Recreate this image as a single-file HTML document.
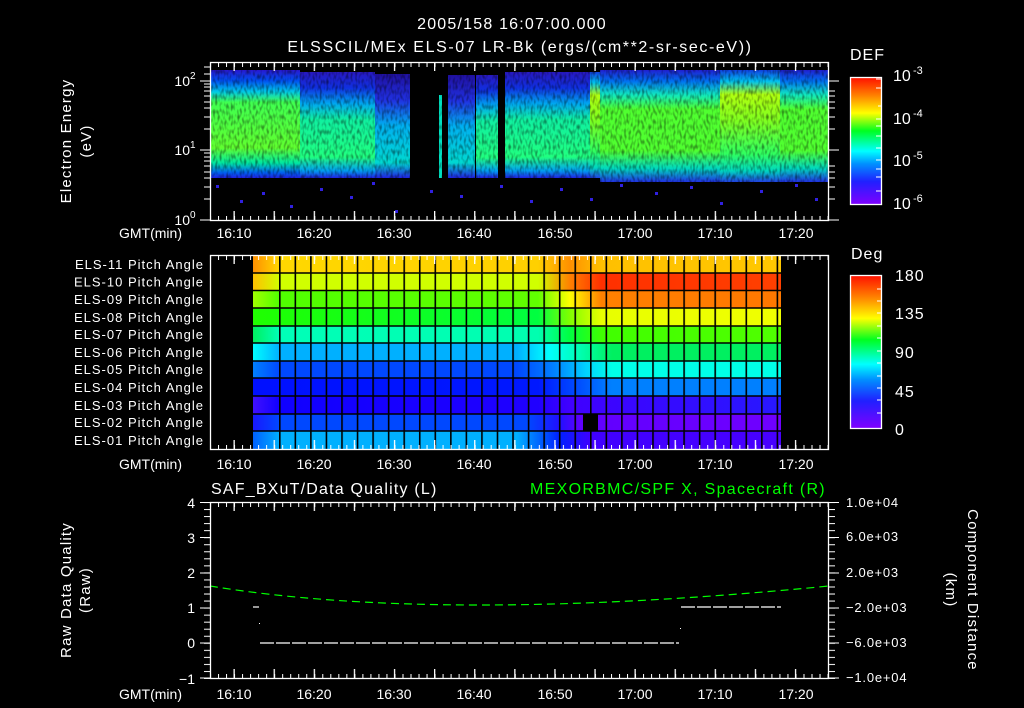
<!DOCTYPE html>
<html><head><meta charset="utf-8"><style>
html,body{margin:0;padding:0;background:#000;}
svg{display:block;}
text{font-family:"Liberation Sans",sans-serif;fill:#fff;}
</style></head><body>
<svg width="1024" height="708" viewBox="0 0 1024 708" xmlns="http://www.w3.org/2000/svg">
<defs>
<pattern id="tmin" x="210" y="0" width="8.02" height="708" patternUnits="userSpaceOnUse"><rect x="0" y="0" width="1" height="708" fill="#fff"/></pattern>
<pattern id="tmaj" x="233.5" y="0" width="40.1" height="708" patternUnits="userSpaceOnUse"><rect x="0" y="0" width="1.3" height="708" fill="#fff"/></pattern>
<pattern id="vgrid" x="279" y="0" width="15.55" height="708" patternUnits="userSpaceOnUse"><rect x="0" y="0" width="1.6" height="708" fill="#000"/></pattern>
<pattern id="ymin3" x="0" y="502" width="708" height="7.04" patternUnits="userSpaceOnUse"><rect x="0" y="0" width="708" height="1" fill="#fff"/></pattern>
<linearGradient id="cb" x1="0" y1="1" x2="0" y2="0">
<stop offset="0" stop-color="#8000ff"/><stop offset="0.18" stop-color="#2020ff"/><stop offset="0.32" stop-color="#0090ff"/><stop offset="0.42" stop-color="#00ffff"/><stop offset="0.58" stop-color="#00ff20"/><stop offset="0.72" stop-color="#ffff00"/><stop offset="0.86" stop-color="#ff8000"/><stop offset="1" stop-color="#ff1000"/></linearGradient>
<linearGradient id="gA" x1="0" y1="0" x2="0" y2="1">
<stop offset="0" stop-color="#2818d0"/><stop offset="0.1" stop-color="#0050f0"/><stop offset="0.2" stop-color="#00c8e8"/><stop offset="0.3" stop-color="#40ff50"/><stop offset="0.72" stop-color="#60ff30"/><stop offset="0.86" stop-color="#00e8a0"/><stop offset="0.95" stop-color="#0060f0"/><stop offset="1" stop-color="#2020e0"/></linearGradient>
<linearGradient id="gB" x1="0" y1="0" x2="0" y2="1">
<stop offset="0" stop-color="#2818c0"/><stop offset="0.15" stop-color="#1030e0"/><stop offset="0.3" stop-color="#00a8f0"/><stop offset="0.45" stop-color="#10f0a0"/><stop offset="0.8" stop-color="#20ff80"/><stop offset="0.93" stop-color="#00a0f0"/><stop offset="1" stop-color="#2020e0"/></linearGradient>
<linearGradient id="gC" x1="0" y1="0" x2="0" y2="1">
<stop offset="0" stop-color="#2010a0"/><stop offset="0.25" stop-color="#2030e0"/><stop offset="0.5" stop-color="#00b0f0"/><stop offset="0.85" stop-color="#00d8d0"/><stop offset="1" stop-color="#2020e0"/></linearGradient>
<linearGradient id="gE" x1="0" y1="0" x2="0" y2="1">
<stop offset="0" stop-color="#1040e0"/><stop offset="0.1" stop-color="#00c0f0"/><stop offset="0.22" stop-color="#b0ff10"/><stop offset="0.45" stop-color="#80ff20"/><stop offset="0.75" stop-color="#30ff60"/><stop offset="0.9" stop-color="#00d8c0"/><stop offset="1" stop-color="#2040e0"/></linearGradient>
<linearGradient id="gF" x1="0" y1="0" x2="0" y2="1">
<stop offset="0" stop-color="#2020d0"/><stop offset="0.1" stop-color="#0070f0"/><stop offset="0.22" stop-color="#10e8c0"/><stop offset="0.35" stop-color="#50ff30"/><stop offset="0.72" stop-color="#50ff30"/><stop offset="0.88" stop-color="#00d8c0"/><stop offset="1" stop-color="#2030e0"/></linearGradient>
<filter id="spk" x="0" y="0" width="1" height="1"><feTurbulence type="fractalNoise" baseFrequency="0.45 0.2" numOctaves="1" seed="3"/><feColorMatrix type="matrix" values="0 0 0 0 0  0 0 0 0 0  0 0 0 0 0  0 0 0 -2.2 1.25"/></filter>
</defs>

<text x="512" y="29" font-size="16" text-anchor="middle" letter-spacing="1.2">2005/158 16:07:00.000</text>
<text x="520" y="52" font-size="16" text-anchor="middle" letter-spacing="1.6">ELSSCIL/MEx ELS-07 LR-Bk  (ergs/(cm**2-sr-sec-eV))</text>

<!-- Panel 1 spectrogram -->
<rect x="211" y="70" width="89" height="108" fill="url(#gA)"/>
<rect x="300" y="72" width="75" height="106" fill="url(#gB)"/>
<rect x="375" y="74" width="35" height="104" fill="url(#gC)"/>
<rect x="439" y="95" width="3" height="83" fill="#00e0c0"/>
<rect x="448" y="75" width="27" height="103" fill="url(#gC)"/>
<rect x="476" y="75" width="22" height="103" fill="url(#gB)"/>
<rect x="505" y="72" width="85" height="106" fill="url(#gB)"/>
<rect x="590" y="72" width="10" height="106" fill="url(#gE)"/>
<rect x="600" y="70" width="120" height="112" fill="url(#gF)"/>
<rect x="720" y="70" width="60" height="112" fill="url(#gE)"/>
<rect x="780" y="70" width="48" height="112" fill="url(#gF)"/>
<rect x="211" y="70" width="617" height="112" filter="url(#spk)" opacity="0.55"/>
<g fill="#3020e0">
<rect x="216" y="185" width="3" height="3"/><rect x="240" y="200" width="3" height="3"/><rect x="262" y="192" width="3" height="3"/><rect x="290" y="205" width="3" height="3"/><rect x="320" y="188" width="3" height="3"/><rect x="350" y="196" width="3" height="3"/><rect x="372" y="182" width="3" height="3"/><rect x="395" y="210" width="3" height="3"/><rect x="430" y="190" width="3" height="3"/><rect x="460" y="195" width="3" height="3"/><rect x="500" y="185" width="3" height="3"/><rect x="530" y="200" width="3" height="3"/><rect x="560" y="188" width="3" height="3"/><rect x="590" y="198" width="3" height="3"/><rect x="620" y="184" width="3" height="3"/><rect x="655" y="192" width="3" height="3"/><rect x="690" y="186" width="3" height="3"/><rect x="720" y="202" width="3" height="3"/><rect x="760" y="190" width="3" height="3"/><rect x="795" y="184" width="3" height="3"/><rect x="815" y="198" width="3" height="3"/>
</g>

<rect x="210.5" y="62.5" width="618" height="158" fill="none" stroke="#fff" stroke-width="1.3"/>
<rect x="210" y="62" width="619" height="5" fill="url(#tmin)"/>
<rect x="210" y="62" width="619" height="9" fill="url(#tmaj)"/>
<rect x="210" y="216" width="619" height="5" fill="url(#tmin)"/>
<rect x="210" y="211" width="619" height="10" fill="url(#tmaj)"/>
<g stroke="#fff" stroke-width="1">
<path d="M200,220H210M200,150H210M200,81H210M204,199H210M204,187H210M204,178H210M204,172H210M204,166H210M204,161H210M204,157H210M204,153H210M204,129H210M204,117H210M204,108H210M204,102H210M204,96H210M204,91H210M204,87H210M204,84H210M204,74H210M204,67H210"/>
<path d="M829,220H839M829,150H839M829,81H839M829,199H835M829,187H835M829,178H835M829,172H835M829,166H835M829,129H835M829,117H835M829,108H835M829,102H835M829,96H835M829,91H835"/>
</g>
<g font-size="14" text-anchor="end"><text x="190" y="225">10</text><text x="190" y="155">10</text><text x="190" y="86">10</text></g>
<g font-size="10"><text x="190" y="218">0</text><text x="190" y="148">1</text><text x="190" y="79">2</text></g>
<text transform="translate(71,141) rotate(-90)" font-size="15" text-anchor="middle" letter-spacing="1.2">Electron Energy</text>
<text transform="translate(91,141) rotate(-90)" font-size="15" text-anchor="middle" letter-spacing="1.2">(eV)</text>
<text x="182" y="238" font-size="14" text-anchor="end">GMT(min)</text>
<g font-size="14" text-anchor="middle">
<text x="234" y="238">16:10</text><text x="314" y="238">16:20</text><text x="394" y="238">16:30</text><text x="474" y="238">16:40</text><text x="555" y="238">16:50</text><text x="635" y="238">17:00</text><text x="715" y="238">17:10</text><text x="796" y="238">17:20</text></g>

<text x="850" y="60" font-size="16" letter-spacing="1">DEF</text>
<rect x="850.5" y="77.5" width="31" height="127" fill="url(#cb)" stroke="#fff" stroke-width="1.3"/>
<g stroke="#fff"><path d="M876,79H882M876,88H882M878,106H882M876,119H882M876,126H882M876,136H882M876,148H882M876,160H882M876,169H882M876,177H882M876,191H882"/></g>
<g font-size="16"><text x="893" y="81">10</text><text x="893" y="124">10</text><text x="893" y="166">10</text><text x="893" y="209">10</text></g>
<g font-size="11"><text x="913" y="74">-3</text><text x="913" y="117">-4</text><text x="913" y="159">-5</text><text x="913" y="202">-6</text></g>

<!-- Panel 2 -->
<defs>
<linearGradient id="r11" gradientUnits="userSpaceOnUse" x1="253" x2="781"><stop offset="0" stop-color="#ff9000"/><stop offset="0.05" stop-color="#ffd800"/><stop offset="0.54" stop-color="#ffd000"/><stop offset="0.6" stop-color="#ff9000"/><stop offset="0.66" stop-color="#ffc000"/><stop offset="1" stop-color="#ffc800"/></linearGradient>
<linearGradient id="r10" gradientUnits="userSpaceOnUse" x1="253" x2="781"><stop offset="0" stop-color="#ffc000"/><stop offset="0.05" stop-color="#d0ff00"/><stop offset="0.54" stop-color="#d0ff00"/><stop offset="0.6" stop-color="#ff8000"/><stop offset="0.66" stop-color="#ff3000"/><stop offset="1" stop-color="#ff4000"/></linearGradient>
<linearGradient id="r9" gradientUnits="userSpaceOnUse" x1="253" x2="781"><stop offset="0" stop-color="#a0ff00"/><stop offset="0.05" stop-color="#50ff00"/><stop offset="0.54" stop-color="#60ff00"/><stop offset="0.6" stop-color="#ffff00"/><stop offset="0.66" stop-color="#ff8000"/><stop offset="1" stop-color="#ff7800"/></linearGradient>
<linearGradient id="r8" gradientUnits="userSpaceOnUse" x1="253" x2="781"><stop offset="0" stop-color="#20ff00"/><stop offset="0.54" stop-color="#00ff40"/><stop offset="0.6" stop-color="#80ff00"/><stop offset="0.66" stop-color="#e8ff00"/><stop offset="1" stop-color="#f0ff00"/></linearGradient>
<linearGradient id="r7" gradientUnits="userSpaceOnUse" x1="253" x2="781"><stop offset="0" stop-color="#00f060"/><stop offset="0.05" stop-color="#00ffb8"/><stop offset="0.54" stop-color="#00ffb0"/><stop offset="0.6" stop-color="#00ff40"/><stop offset="0.66" stop-color="#40ff00"/><stop offset="1" stop-color="#50ff00"/></linearGradient>
<linearGradient id="r6" gradientUnits="userSpaceOnUse" x1="253" x2="781"><stop offset="0" stop-color="#00ffff"/><stop offset="0.05" stop-color="#00b0ff"/><stop offset="0.5" stop-color="#00b0ff"/><stop offset="0.56" stop-color="#00ffff"/><stop offset="0.62" stop-color="#00ffb0"/><stop offset="0.68" stop-color="#00f060"/><stop offset="1" stop-color="#00f060"/></linearGradient>
<linearGradient id="r5" gradientUnits="userSpaceOnUse" x1="253" x2="781"><stop offset="0" stop-color="#0080ff"/><stop offset="0.05" stop-color="#0048ff"/><stop offset="0.5" stop-color="#0048ff"/><stop offset="0.57" stop-color="#0080ff"/><stop offset="0.63" stop-color="#00d0ff"/><stop offset="0.68" stop-color="#00ffe8"/><stop offset="1" stop-color="#00ffe8"/></linearGradient>
<linearGradient id="r4" gradientUnits="userSpaceOnUse" x1="253" x2="781"><stop offset="0" stop-color="#0010ff"/><stop offset="0.54" stop-color="#0018ff"/><stop offset="0.62" stop-color="#0050ff"/><stop offset="0.68" stop-color="#0080ff"/><stop offset="1" stop-color="#0080ff"/></linearGradient>
<linearGradient id="r3" gradientUnits="userSpaceOnUse" x1="253" x2="781"><stop offset="0" stop-color="#4010ff"/><stop offset="0.05" stop-color="#1000ff"/><stop offset="0.54" stop-color="#2000ff"/><stop offset="0.6" stop-color="#4000ff"/><stop offset="1" stop-color="#2818ff"/></linearGradient>
<linearGradient id="r2" gradientUnits="userSpaceOnUse" x1="253" x2="781"><stop offset="0" stop-color="#1818ff"/><stop offset="0.05" stop-color="#0048ff"/><stop offset="0.52" stop-color="#0048ff"/><stop offset="0.58" stop-color="#2010ff"/><stop offset="0.62" stop-color="#6000ff"/><stop offset="1" stop-color="#7000ff"/></linearGradient>
<linearGradient id="r1" gradientUnits="userSpaceOnUse" x1="253" x2="781"><stop offset="0" stop-color="#0060ff"/><stop offset="0.05" stop-color="#00b0ff"/><stop offset="0.5" stop-color="#00b0ff"/><stop offset="0.58" stop-color="#0020ff"/><stop offset="0.64" stop-color="#4000ff"/><stop offset="1" stop-color="#4800ff"/></linearGradient>
</defs>
<rect x="253" y="255" width="528" height="18" fill="url(#r11)"/>
<rect x="253" y="273" width="528" height="17.5" fill="url(#r10)"/>
<rect x="253" y="290.5" width="528" height="17.5" fill="url(#r9)"/>
<rect x="253" y="308" width="528" height="18" fill="url(#r8)"/>
<rect x="253" y="326" width="528" height="17" fill="url(#r7)"/>
<rect x="253" y="343" width="528" height="18" fill="url(#r6)"/>
<rect x="253" y="361" width="528" height="17" fill="url(#r5)"/>
<rect x="253" y="378" width="528" height="18" fill="url(#r4)"/>
<rect x="253" y="396" width="528" height="18" fill="url(#r3)"/>
<rect x="253" y="414" width="528" height="17" fill="url(#r2)"/>
<rect x="253" y="431" width="528" height="18" fill="url(#r1)"/>
<rect x="583" y="414" width="15" height="17" fill="#000"/>
<rect x="279" y="255" width="502" height="194" fill="url(#vgrid)"/>
<g stroke="#000" stroke-width="1.6"><path d="M253,273H781M253,290.5H781M253,308H781M253,326H781M253,343H781M253,361H781M253,378H781M253,396H781M253,414H781M253,431H781"/></g>
<rect x="210.5" y="255.5" width="618" height="194" fill="none" stroke="#fff" stroke-width="1.3"/>
<rect x="210" y="255" width="619" height="5" fill="url(#tmin)"/>
<rect x="210" y="255" width="619" height="9" fill="url(#tmaj)"/>
<rect x="210" y="445" width="619" height="5" fill="url(#tmin)"/>
<rect x="210" y="440" width="619" height="10" fill="url(#tmaj)"/>
<g font-size="13" text-anchor="end" letter-spacing="1">
<text x="204" y="269">ELS-11 Pitch Angle</text><text x="204" y="286.5">ELS-10 Pitch Angle</text><text x="204" y="304">ELS-09 Pitch Angle</text><text x="204" y="322">ELS-08 Pitch Angle</text><text x="204" y="339">ELS-07 Pitch Angle</text><text x="204" y="357">ELS-06 Pitch Angle</text><text x="204" y="374">ELS-05 Pitch Angle</text><text x="204" y="392">ELS-04 Pitch Angle</text><text x="204" y="410">ELS-03 Pitch Angle</text><text x="204" y="427">ELS-02 Pitch Angle</text><text x="204" y="445">ELS-01 Pitch Angle</text></g>
<text x="182" y="469" font-size="14" text-anchor="end">GMT(min)</text>
<g font-size="14" text-anchor="middle">
<text x="234" y="469">16:10</text><text x="314" y="469">16:20</text><text x="394" y="469">16:30</text><text x="474" y="469">16:40</text><text x="555" y="469">16:50</text><text x="635" y="469">17:00</text><text x="715" y="469">17:10</text><text x="796" y="469">17:20</text></g>

<text x="851" y="259" font-size="16" letter-spacing="1">Deg</text>
<rect x="850.5" y="275.5" width="31" height="153" fill="url(#cb)" stroke="#fff" stroke-width="1.3"/>
<g stroke="#fff"><path d="M877,289H882M877,301H882M877,313H882M877,326H882M877,338H882M877,351H882M877,363H882M877,376H882M877,388H882M877,400H882M877,413H882"/></g>
<g font-size="16" letter-spacing="1"><text x="895" y="281">180</text><text x="895" y="319">135</text><text x="895" y="358">90</text><text x="895" y="397">45</text><text x="895" y="435">0</text></g>

<!-- Panel 3 -->
<text x="211" y="494" font-size="16" letter-spacing="1.2">SAF_BXuT/Data Quality (L)</text>
<text x="530" y="494" font-size="16" style="fill:#00ff00" letter-spacing="1.3">MEXORBMC/SPF X, Spacecraft (R)</text>
<path d="M210,586 Q440,624 829,586" fill="none" stroke="#00ff00" stroke-width="1.2" stroke-dasharray="8,5"/>
<path d="M260,643H679" stroke="#fff" stroke-width="1.2" stroke-dasharray="14,2"/>
<path d="M681,607H781" stroke="#fff" stroke-width="1.2" stroke-dasharray="14,2"/>
<path d="M253,607H259" stroke="#fff" stroke-width="1.2"/>
<rect x="259" y="623" width="1" height="1" fill="#fff"/><rect x="680" y="628" width="1" height="1" fill="#fff"/>
<rect x="210.5" y="502.5" width="618" height="176" fill="none" stroke="#fff" stroke-width="1.3"/>
<rect x="210" y="502" width="619" height="5" fill="url(#tmin)"/>
<rect x="210" y="502" width="619" height="9" fill="url(#tmaj)"/>
<rect x="210" y="674" width="619" height="5" fill="url(#tmin)"/>
<rect x="210" y="669" width="619" height="10" fill="url(#tmaj)"/>
<rect x="204" y="502" width="6" height="177" fill="url(#ymin3)"/>
<rect x="829" y="502" width="6" height="177" fill="url(#ymin3)"/>
<g stroke="#fff"><path d="M200,502.5H210M200,537.5H210M200,573H210M200,608H210M200,643H210M200,678H210M829,502.5H839M829,537.5H839M829,573H839M829,608H839M829,643H839M829,678H839"/></g>
<g font-size="14" text-anchor="end"><text x="195" y="508">4</text><text x="195" y="543">3</text><text x="195" y="578">2</text><text x="195" y="613">1</text><text x="195" y="648">0</text><text x="195" y="684">−1</text></g>
<g font-size="13" letter-spacing="0.8"><text x="846" y="507">1.0e+04</text><text x="846" y="541">6.0e+03</text><text x="846" y="577">2.0e+03</text><text x="846" y="612">−2.0e+03</text><text x="846" y="647">−6.0e+03</text><text x="846" y="682">−1.0e+04</text></g>
<text transform="translate(71,590) rotate(-90)" font-size="15" text-anchor="middle" letter-spacing="1.2">Raw Data Quality</text>
<text transform="translate(90,590) rotate(-90)" font-size="15" text-anchor="middle" letter-spacing="1.2">(Raw)</text>
<text transform="translate(968,590) rotate(90)" font-size="15" text-anchor="middle" letter-spacing="1.2">Component Distance</text>
<text transform="translate(946,590) rotate(90)" font-size="15" text-anchor="middle" letter-spacing="1.2">(km)</text>
<text x="182" y="699" font-size="14" text-anchor="end">GMT(min)</text>
<g font-size="14" text-anchor="middle">
<text x="234" y="699">16:10</text><text x="314" y="699">16:20</text><text x="394" y="699">16:30</text><text x="474" y="699">16:40</text><text x="555" y="699">16:50</text><text x="635" y="699">17:00</text><text x="715" y="699">17:10</text><text x="796" y="699">17:20</text></g>
</svg>
</body></html>
